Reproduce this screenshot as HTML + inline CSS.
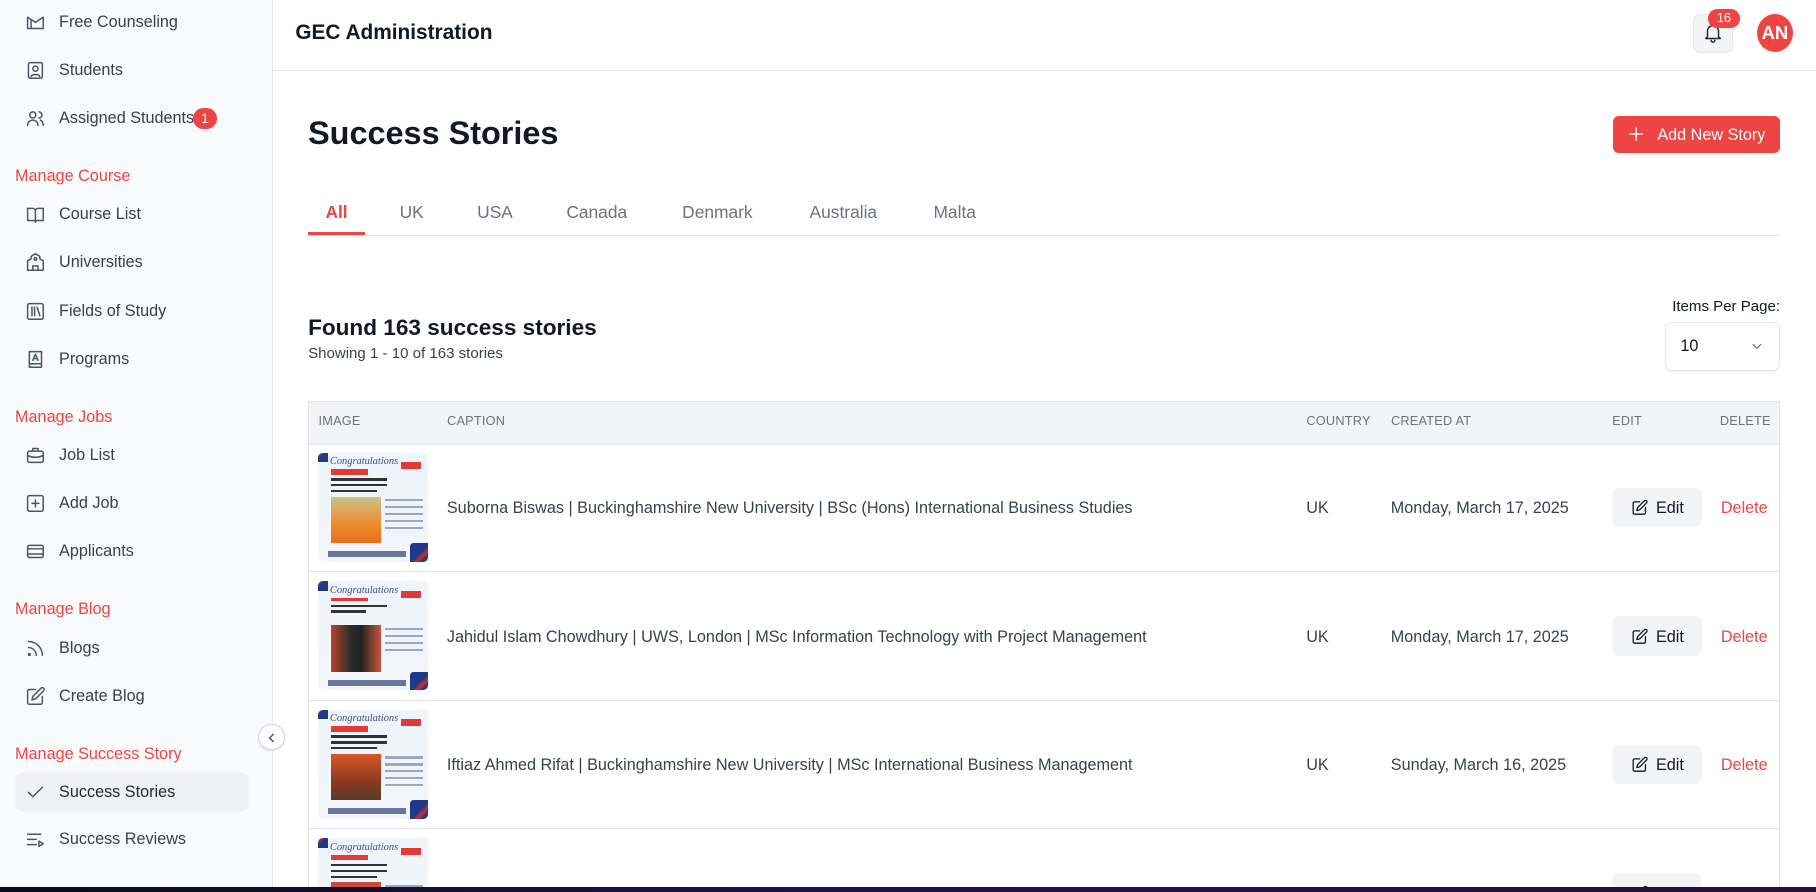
<!DOCTYPE html>
<html><head><meta charset="utf-8">
<style>
html{zoom:1.15816}
*{box-sizing:border-box;margin:0;padding:0}
html,body{overflow:hidden}
body{width:1568px;height:770px;font-family:"Liberation Sans",sans-serif;background:#fff;color:#111827}
#w{position:relative;width:1568px;height:770px;overflow:hidden}
.sb{position:absolute;left:0;top:0;width:236px;height:770px;background:#f9fafb;border-right:1px solid #e5e7eb}
.it{position:absolute;left:13px;width:202px;height:34px;display:flex;align-items:center;font-size:14px;color:#374151}
.it svg{position:absolute;left:9px;width:18px;height:18px;fill:none;stroke:#4b5563;stroke-width:1.7;stroke-linecap:round;stroke-linejoin:round}
.it span{position:absolute;left:38px}
.hd{position:absolute;left:13px;font-size:14px;color:#ef4444}
.act{background:#f0f1f3;border-radius:8px}
.top{position:absolute;left:236px;top:0;right:0;height:61px;border-bottom:1px solid #e5e7eb}
.abs{position:absolute}
.tab{position:absolute;top:174px;font-size:15px;color:#6b7280}
.th{position:absolute;top:357px;font-size:11px;color:#6b7280;letter-spacing:.2px}
.row{position:absolute;left:266px;width:1271px;height:111px;border-bottom:1px solid #e5e7eb;border-left:1px solid #e5e7eb;border-right:1px solid #e5e7eb}
.row .t{position:absolute;top:48px;font-size:14px;color:#374151}
.edit{position:absolute;left:1125px;top:38px;width:78px;height:34px;background:#f3f4f6;border-radius:6px;font-size:14px;color:#111827}
.edit svg{position:absolute;left:16px;top:10px;width:15px;height:15px;fill:none;stroke:#111827;stroke-width:1.8;stroke-linecap:round;stroke-linejoin:round}
.edit span{position:absolute;left:38px;top:10px}
.del{position:absolute;left:1219px;top:48px;font-size:14px;color:#ef4444}
.img{position:absolute;left:8px;top:8px;width:95px;height:94px;border-radius:4px;background:linear-gradient(180deg,#eef4fb,#f3f6fa);overflow:hidden}
.img .c{position:absolute;left:10px;top:3px;font-family:"Liberation Serif",serif;font-style:italic;font-size:9px;color:#4b4b7a}
.img .n{position:absolute;left:11px;top:14px;width:32px;height:5px;background:#e53935}
.img .l{position:absolute;left:11px;height:2px;background:#333;width:48px}
.img .p{position:absolute;left:11px;top:38px;width:43px;height:40px}
.img .r{position:absolute;left:58px;height:2px;width:32px;background:#9aa7c7}
.img .b{position:absolute;left:8px;bottom:4px;width:68px;height:5px;background:#2c3e7a;opacity:.7}
.img .f{position:absolute;right:-6px;bottom:-6px;width:22px;height:22px;background:linear-gradient(135deg,#1e3a8a 40%,#dc2626 50%,#1e3a8a 60%);border-radius:3px}
.img .f2{position:absolute;left:-6px;top:-6px;width:14px;height:14px;background:linear-gradient(135deg,#1e3a8a 40%,#dc2626 50%,#1e3a8a 60%)}
.img .lg{position:absolute;right:6px;top:8px;width:18px;height:6px;background:#e53935}
</style></head><body><div id="w">
<div class="sb">
  <div class="it" style="top:2px"><svg viewBox="0 0 24 24"><path d="M3 6v13h18V6M3 6l9 6 9-6M7 19V9"/></svg><span>Free Counseling</span></div>
  <div class="it" style="top:44px"><svg viewBox="0 0 24 24"><rect x="4" y="3" width="16" height="18" rx="2"/><circle cx="12" cy="10" r="3"/><path d="M7 19c1-3 9-3 10 0"/></svg><span>Students</span></div>
  <div class="it" style="top:85px"><svg viewBox="0 0 24 24"><circle cx="9" cy="8" r="3.5"/><path d="M3 20c0-4 3-6 6-6s6 2 6 6M16 4.5a3.5 3.5 0 010 7M18 14c2 1 3 3 3 6"/></svg><span>Assigned Students</span>
    <div class="abs" style="left:154px;top:8px;width:20px;height:18px;border-radius:9px;background:#ef4444;color:#fff;font-size:12px;text-align:center;line-height:18px">1</div></div>
  <div class="hd" style="top:144px">Manage Course</div>
  <div class="it" style="top:168px"><svg viewBox="0 0 24 24"><path d="M3 5h6a3 3 0 013 3v13a2 2 0 00-2-2H3zM21 5h-6a3 3 0 00-3 3v13a2 2 0 012-2h7z"/></svg><span>Course List</span></div>
  <div class="it" style="top:210px"><svg viewBox="0 0 24 24"><path d="M3 21V10l4-2V5l5-3 5 3v3l4 2v11zM9 21v-5h6v5M3 21h18"/><circle cx="12" cy="8" r="1.5"/></svg><span>Universities</span></div>
  <div class="it" style="top:252px"><svg viewBox="0 0 24 24"><rect x="3" y="3" width="18" height="18" rx="2"/><path d="M8 7v10M11 7v10M14 7l3 10"/></svg><span>Fields of Study</span></div>
  <div class="it" style="top:293px"><svg viewBox="0 0 24 24"><path d="M5 3h14v18H5zM5 17h14M9 13l3-7 3 7M10 11h4"/></svg><span>Programs</span></div>
  <div class="hd" style="top:352px">Manage Jobs</div>
  <div class="it" style="top:376px"><svg viewBox="0 0 24 24"><rect x="3" y="7" width="18" height="13" rx="2"/><path d="M9 7V4h6v3M3 12c6 3 12 3 18 0"/></svg><span>Job List</span></div>
  <div class="it" style="top:418px"><svg viewBox="0 0 24 24"><rect x="3" y="3" width="18" height="18" rx="2"/><path d="M12 8v8M8 12h8"/></svg><span>Add Job</span></div>
  <div class="it" style="top:459px"><svg viewBox="0 0 24 24"><rect x="3" y="5" width="18" height="14" rx="2"/><path d="M3 9h18M3 15h18"/></svg><span>Applicants</span></div>
  <div class="hd" style="top:518px">Manage Blog</div>
  <div class="it" style="top:543px"><svg viewBox="0 0 24 24"><path d="M4 11a9 9 0 019 9M4 4a16 16 0 0116 16"/><circle cx="5" cy="19" r="1"/></svg><span>Blogs</span></div>
  <div class="it" style="top:584px"><svg viewBox="0 0 24 24"><path d="M12 4H5a2 2 0 00-2 2v13a2 2 0 002 2h13a2 2 0 002-2v-7M18.5 2.5a2.1 2.1 0 013 3L12 15l-4 1 1-4z"/></svg><span>Create Blog</span></div>
  <div class="hd" style="top:643px">Manage Success Story</div>
  <div class="it act" style="top:667px"><svg viewBox="0 0 24 24"><path d="M4 12l5 5L20 6"/></svg><span style="color:#1f2937">Success Stories</span></div>
  <div class="it" style="top:708px"><svg viewBox="0 0 24 24"><path d="M3 6h15M3 12h10M3 18h10M16 14v6l5-3z"/></svg><span>Success Reviews</span></div>
</div>
<div class="abs" style="left:223px;top:625px;width:23px;height:23px;border-radius:50%;background:#fff;border:1px solid #d1d5db;box-shadow:0 1px 2px rgba(0,0,0,.1)"><svg viewBox="0 0 24 24" style="position:absolute;left:5px;top:5px;width:12px;height:12px;fill:none;stroke:#4b5563;stroke-width:2.5"><path d="M15 5l-7 7 7 7"/></svg></div>

<div class="top">
  <div class="abs" style="left:19px;top:18px;font-size:18px;font-weight:bold;color:#111827">GEC Administration</div>
  <div class="abs" style="left:1226px;top:12px;width:34px;height:34px;background:#f3f4f6;border-radius:6px;border:1px solid #e5e7eb"><svg viewBox="0 0 24 24" style="position:absolute;left:7px;top:6px;width:19px;height:19px;fill:none;stroke:#1f2937;stroke-width:1.6;stroke-linecap:round;stroke-linejoin:round"><path d="M6 16V10a6 6 0 0112 0v6l2 2H4zM10 20a2 2 0 004 0"/></svg></div>
  <div class="abs" style="left:1239px;top:8px;width:27px;height:16px;border-radius:8px;background:#ef4444;color:#fff;font-size:11px;text-align:center;line-height:16px">16</div>
  <div class="abs" style="left:1281px;top:12px;width:31px;height:33px;border-radius:50%;background:#ef4444;color:#fff;font-size:16px;font-weight:bold;text-align:center;line-height:33px">AN</div>
</div>

<div class="abs" style="left:266px;top:99px;font-size:28px;font-weight:bold;color:#111827">Success Stories</div>
<div class="abs" style="left:1393px;top:100px;width:144px;height:32px;background:#ef4444;border-radius:5px;color:#fff;font-size:14px"><svg viewBox="0 0 24 24" style="position:absolute;left:13px;top:9px;width:14px;height:14px;fill:none;stroke:#fff;stroke-width:2"><path d="M12 2v20M2 12h20"/></svg><span style="position:absolute;left:38px;top:9px">Add New Story</span></div>

<div class="tab" style="left:281px;color:#ef4444;font-weight:bold">All</div>
<div class="tab" style="left:345px">UK</div>
<div class="tab" style="left:412px">USA</div>
<div class="tab" style="left:489px">Canada</div>
<div class="tab" style="left:589px">Denmark</div>
<div class="tab" style="left:699px">Australia</div>
<div class="tab" style="left:806px">Malta</div>
<div class="abs" style="left:266px;top:203px;width:1271px;height:1px;background:#e5e7eb"></div>
<div class="abs" style="left:266px;top:200px;width:49px;height:3px;background:#ef4444"></div>

<div class="abs" style="left:266px;top:272px;font-size:19.5px;font-weight:bold;color:#111827">Found 163 success stories</div>
<div class="abs" style="left:266px;top:298px;font-size:13px;color:#374151">Showing 1 - 10 of 163 stories</div>
<div class="abs" style="left:1400px;width:137px;text-align:right;top:257px;font-size:13px;color:#111827">Items Per Page:</div>
<div class="abs" style="left:1438px;top:278px;width:99px;height:42px;border:1px solid #e5e7eb;border-radius:6px;box-shadow:0 1px 2px rgba(0,0,0,.05)"><span style="position:absolute;left:12px;top:12px;font-size:14px">10</span><svg viewBox="0 0 24 24" style="position:absolute;left:72px;top:14px;width:12px;height:12px;fill:none;stroke:#6b7280;stroke-width:2"><path d="M5 9l7 7 7-7"/></svg></div>

<div class="abs" style="left:266px;top:346px;width:1271px;height:38px;background:#f3f4f6;border:1px solid #e5e7eb"></div>
<div class="th" style="left:275px">IMAGE</div>
<div class="th" style="left:386px">CAPTION</div>
<div class="th" style="left:1128px">COUNTRY</div>
<div class="th" style="left:1201px">CREATED AT</div>
<div class="th" style="left:1392px">EDIT</div>
<div class="th" style="left:1485px">DELETE</div>

<div class="row" style="top:383px">
  <div class="img"><div class="f2"></div><div class="c">Congratulations</div><div class="lg"></div><div class="n"></div><div class="l" style="top:22px"></div><div class="l" style="top:27px"></div><div class="l" style="top:32px;width:40px"></div><div class="p" style="background:linear-gradient(180deg,#c9c28a,#f08a2c 60%,#e76f1a)"></div><div class="r" style="top:40px"></div><div class="r" style="top:46px"></div><div class="r" style="top:52px"></div><div class="r" style="top:58px"></div><div class="r" style="top:64px"></div><div class="b"></div><div class="f"></div></div>
  <div class="t" style="left:119px">Suborna Biswas | Buckinghamshire New University | BSc (Hons) International Business Studies</div>
  <div class="t" style="left:861px">UK</div>
  <div class="t" style="left:934px">Monday, March 17, 2025</div>
  <div class="edit"><svg viewBox="0 0 24 24"><path d="M12 4H5a2 2 0 00-2 2v13a2 2 0 002 2h13a2 2 0 002-2v-7M18.5 2.5a2.1 2.1 0 013 3L12 15l-4 1 1-4z"/></svg><span>Edit</span></div>
  <div class="del">Delete</div>
</div>
<div class="row" style="top:494px">
  <div class="img"><div class="f2"></div><div class="c">Congratulations</div><div class="lg"></div><div class="n" style="height:3px"></div><div class="l" style="top:20px"></div><div class="l" style="top:25px;width:30px"></div><div class="p" style="background:linear-gradient(90deg,#b5452c,#2b2b2b 40%,#222 60%,#c9573a)"></div><div class="r" style="top:40px"></div><div class="r" style="top:46px"></div><div class="r" style="top:52px"></div><div class="r" style="top:58px"></div><div class="b"></div><div class="f"></div></div>
  <div class="t" style="left:119px">Jahidul Islam Chowdhury | UWS, London | MSc Information Technology with Project Management</div>
  <div class="t" style="left:861px">UK</div>
  <div class="t" style="left:934px">Monday, March 17, 2025</div>
  <div class="edit"><svg viewBox="0 0 24 24"><path d="M12 4H5a2 2 0 00-2 2v13a2 2 0 002 2h13a2 2 0 002-2v-7M18.5 2.5a2.1 2.1 0 013 3L12 15l-4 1 1-4z"/></svg><span>Edit</span></div>
  <div class="del">Delete</div>
</div>
<div class="row" style="top:605px">
  <div class="img"><div class="f2"></div><div class="c">Congratulations</div><div class="lg"></div><div class="n"></div><div class="l" style="top:22px"></div><div class="l" style="top:27px"></div><div class="l" style="top:32px;width:40px"></div><div class="p" style="background:linear-gradient(180deg,#d9582a,#8b3a1e 60%,#5a3a2a)"></div><div class="r" style="top:40px"></div><div class="r" style="top:46px"></div><div class="r" style="top:52px"></div><div class="r" style="top:58px"></div><div class="r" style="top:64px"></div><div class="b"></div><div class="f"></div></div>
  <div class="t" style="left:119px">Iftiaz Ahmed Rifat | Buckinghamshire New University | MSc International Business Management</div>
  <div class="t" style="left:861px">UK</div>
  <div class="t" style="left:934px">Sunday, March 16, 2025</div>
  <div class="edit"><svg viewBox="0 0 24 24"><path d="M12 4H5a2 2 0 00-2 2v13a2 2 0 002 2h13a2 2 0 002-2v-7M18.5 2.5a2.1 2.1 0 013 3L12 15l-4 1 1-4z"/></svg><span>Edit</span></div>
  <div class="del">Delete</div>
</div>
<div class="row" style="top:716px">
  <div class="img"><div class="f2"></div><div class="c">Congratulations</div><div class="lg"></div><div class="n"></div><div class="l" style="top:22px"></div><div class="l" style="top:27px"></div><div class="l" style="top:32px;width:40px"></div><div class="p" style="background:#c94a3a"></div><div class="r" style="top:40px"></div></div>
  <div class="t" style="left:119px">Md Farden | Buckinghamshire New University | BSc (Hons) International Business Studies</div>
  <div class="t" style="left:861px">UK</div>
  <div class="t" style="left:934px">Sunday, March 16, 2025</div>
  <div class="edit"><svg viewBox="0 0 24 24"><path d="M12 4H5a2 2 0 00-2 2v13a2 2 0 002 2h13a2 2 0 002-2v-7M18.5 2.5a2.1 2.1 0 013 3L12 15l-4 1 1-4z"/></svg><span>Edit</span></div>
  <div class="del">Delete</div>
</div>
<div class="abs" style="left:0;top:766px;width:1568px;height:4px;background:linear-gradient(90deg,#0b0b1a,#1e1250 50%,#2a0f3a)"></div>
</div></body></html>
